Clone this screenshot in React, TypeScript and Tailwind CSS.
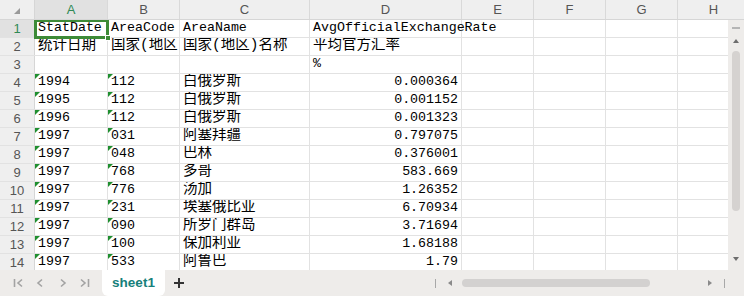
import React from "react";

const colW = ["w-[73px]", "w-[72px]", "w-[130px]", "w-[152px]", "w-[72px]", "w-[72px]", "w-[72px]", "w-[72px]"];
const letters = ["A", "B", "C", "D", "E", "F", "G", "H"];

type Row = { a: string; b: string; c: string; d: string; flag?: boolean };

const rows: Row[] = [
  { a: "StatDate", b: "AreaCode", c: "AreaName", d: "AvgOfficialExchangeRate" },
  { a: "统计日期", b: "国家(地区", c: "国家(地区)名称", d: "平均官方汇率" },
  { a: "", b: "", c: "", d: "%" },
  { a: "1994", b: "112", c: "白俄罗斯", d: "0.000364", flag: true },
  { a: "1995", b: "112", c: "白俄罗斯", d: "0.001152", flag: true },
  { a: "1996", b: "112", c: "白俄罗斯", d: "0.001323", flag: true },
  { a: "1997", b: "031", c: "阿塞拜疆", d: "0.797075", flag: true },
  { a: "1997", b: "048", c: "巴林", d: "0.376001", flag: true },
  { a: "1997", b: "768", c: "多哥", d: "583.669", flag: true },
  { a: "1997", b: "776", c: "汤加", d: "1.26352", flag: true },
  { a: "1997", b: "231", c: "埃塞俄比亚", d: "6.70934", flag: true },
  { a: "1997", b: "090", c: "所罗门群岛", d: "3.71694", flag: true },
  { a: "1997", b: "100", c: "保加利亚", d: "1.68188", flag: true },
  { a: "1997", b: "533", c: "阿鲁巴", d: "1.79", flag: true },
];

const cellFont = "font-['Liberation_Mono','Noto_Sans_CJK_SC',monospace] text-[13.3px] text-black";
const hasCjk = (s: string) => /[\u4e00-\u9fff]/.test(s);

function Cell({ w, text, right, flag, overflow }: { w: string; text: string; right?: boolean; flag?: boolean; overflow?: boolean }) {
  return (
    <div
      className={`${w} shrink-0 h-full border-r border-[#e2e2e2] flex items-end pb-[1px] px-[3px] whitespace-nowrap ${
        right ? "justify-end" : ""
      } ${overflow ? "overflow-visible" : "overflow-hidden"} ${flag ? "relative" : ""}`}
    >
      {flag && (
        <span className="absolute left-0 top-0 w-0 h-0 border-t-[5px] border-r-[5px] border-t-[#1f8f2f] border-r-transparent" />
      )}
      <span className={`${cellFont} ${hasCjk(text) ? "text-[14.5px] leading-[17px]" : "leading-[16px]"}`}>{text}</span>
    </div>
  );
}

export default function App() {
  return (
    <div className="w-[744px] h-[296px] bg-white flex flex-col overflow-hidden select-none">
      {/* column header */}
      <div className="h-[20px] shrink-0 flex bg-[#efefef] border-b border-[#d6d6d6] font-['Liberation_Sans',sans-serif] text-[13px] text-[#555]">
        <div className="w-[35px] shrink-0 border-r border-[#d6d6d6] relative">
          <span className="absolute right-[14px] bottom-[5px] w-0 h-0 border-b-[6px] border-l-[6px] border-b-[#9a9a9a] border-l-transparent" />
        </div>
        {letters.map((l, i) => (
          <div
            key={l}
            className={`${colW[i]} shrink-0 border-r border-[#d9d9d9] flex items-center justify-center ${
              i === 0 ? "bg-[#e1e1e1] text-[#2f8a55]" : ""
            }`}
          >
            {l}
          </div>
        ))}
      </div>

      {/* body */}
      <div className="flex-1 flex min-h-0">
        <div className="flex-1 min-w-0 overflow-hidden relative">
          {rows.map((r, idx) => (
            <div key={idx} className="h-[18px] flex border-b border-[#e2e2e2]">
              <div
                className={`w-[35px] shrink-0 border-r border-[#d6d6d6] flex items-center justify-center font-['Liberation_Sans',sans-serif] text-[13px] ${
                  idx === 0 ? "bg-[#e1e1e1] text-[#2f8a55]" : "bg-[#efefef] text-[#555]"
                }`}
              >
                {idx + 1}
              </div>
              <Cell w={colW[0]} text={r.a} flag={r.flag} />
              <Cell w={colW[1]} text={r.b} flag={r.flag} />
              <Cell w={colW[2]} text={r.c} />
              <Cell w={colW[3]} text={r.d} right={!!r.flag} overflow={idx === 0} />
              <Cell w={colW[4]} text="" />
              <Cell w={colW[5]} text="" />
              <Cell w={colW[6]} text="" />
              <Cell w={colW[7]} text="" />
            </div>
          ))}
          {/* active cell A1 */}
          <div className="absolute left-[34px] top-[-1px] w-[75px] h-[20px] border-[3px] border-[#3d8b37]">
            <span className="absolute right-[-5px] bottom-[-5px] w-[6px] h-[6px] bg-[#3d8b37] border border-white" />
          </div>
        </div>

        {/* vertical scrollbar */}
        <div className="w-[16px] shrink-0 bg-[#eeecea] flex flex-col items-center pt-[7px] pb-[8px]">
          <div className="w-[8px] h-[2px] bg-[#b5b5b5]" />
          <svg width="8" height="6" viewBox="0 0 8 6" className="mt-[9px]">
            <path d="M4 1 L7 5 L1 5 Z" fill="#6d6d6d" />
          </svg>
          <div className="w-[8px] h-[160px] mt-[7px] rounded-full bg-[#d5d2d0]" />
          <div className="flex-1" />
          <svg width="8" height="6" viewBox="0 0 8 6">
            <path d="M1 1 L7 1 L4 5 Z" fill="#6d6d6d" />
          </svg>
        </div>
      </div>

      {/* tab bar */}
      <div className="h-[26px] shrink-0 bg-[#eeecea] flex items-center relative">
        <div className="w-[100px] flex items-center pl-[13px] gap-[11px] text-[#a3a3a3]">
          <svg width="11" height="10" viewBox="0 0 11 10">
            <path d="M1.5 1 V9 M9 1.5 L5 5 L9 8.5" stroke="#a3a3a3" strokeWidth="1.6" fill="none" />
          </svg>
          <svg width="11" height="10" viewBox="0 0 11 10">
            <path d="M7 1.5 L3 5 L7 8.5" stroke="#a3a3a3" strokeWidth="1.6" fill="none" />
          </svg>
          <svg width="11" height="10" viewBox="0 0 11 10">
            <path d="M4 1.5 L8 5 L4 8.5" stroke="#a3a3a3" strokeWidth="1.6" fill="none" />
          </svg>
          <svg width="11" height="10" viewBox="0 0 11 10">
            <path d="M2 1.5 L6 5 L2 8.5 M9.5 1 V9" stroke="#a3a3a3" strokeWidth="1.6" fill="none" />
          </svg>
        </div>
        <div className="ml-[2px] w-[63px] h-full bg-white rounded-b-[6px] flex items-center justify-center font-['Liberation_Sans',sans-serif] font-bold text-[13.5px] text-[#16807a] pt-[1px]">
          sheet1
        </div>
        <svg width="12" height="12" viewBox="0 0 12 12" className="ml-[8px]">
          <path d="M6 1 V11 M1 6 H11" stroke="#333" strokeWidth="2" />
        </svg>
        <div className="flex-1" />
        <div className="flex items-center">
          <div className="w-[1px] h-[9px] bg-[#a8a8a8]" />
          <svg width="6" height="8" viewBox="0 0 6 8" className="ml-[11px]">
            <path d="M5 1 L1 4 L5 7 Z" fill="#8a8a8a" />
          </svg>
          <div className="w-[188px] h-[8px] ml-[9px] rounded-full bg-[#d3d1d0]" />
          <svg width="6" height="8" viewBox="0 0 6 8" className="ml-[57px]">
            <path d="M1 1 L5 4 L1 7 Z" fill="#8a8a8a" />
          </svg>
          <div className="w-[1px] h-[9px] bg-[#a8a8a8] ml-[11px]" />
          <div className="w-[19px]" />
        </div>
      </div>
    </div>
  );
}
